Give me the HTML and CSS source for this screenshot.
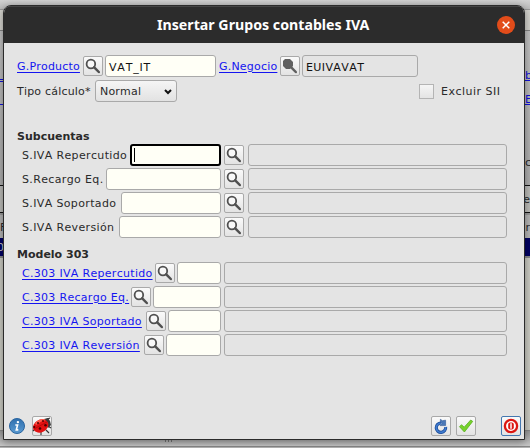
FILE: index.html
```
<!DOCTYPE html>
<html lang="es">
<head>
<meta charset="utf-8">
<title>Insertar Grupos contables IVA</title>
<link rel="stylesheet" href="styles.css">
</head>
<body>
<svg class="defs" width="0" height="0">
  <symbol id="lens" viewBox="0 0 20 20"><circle cx="7.9" cy="8" r="4.3" fill="#f8f8f8" stroke="#505050" stroke-width="1.8"/><path d="M11.2 11.3L15.8 16" stroke="#505050" stroke-width="2.5" stroke-linecap="round"/></symbol>
  <symbol id="lens-full" viewBox="0 0 20 20"><path d="M5 3h5l3 3v4l-3 3H6L3 10V5z" fill="#606060"/><path d="M11.2 11.3L15.8 16" stroke="#606060" stroke-width="2.5" stroke-linecap="round"/></symbol>
</svg>
<div class="desktop">
  <div class="band top"></div>
  <div class="band bar"></div>
  <div class="band form">
    <div class="left-links"><i></i><i></i></div>
    <div class="right-links"><a>b</a><a>E</a><span>c</span></div>
  </div>
  <div class="band tabs"><span>le</span></div>
  <div class="band heads"><span>F</span><span>ar</span></div>
  <div class="band selected"><span>0</span></div>
  <div class="band list"></div>
  <div class="band status"></div>
  <div class="grip"></div>
</div>
<main class="window">
  <header class="title"><h1>Insertar Grupos contables IVA</h1>
    <svg class="close" viewBox="0 0 18 18"><circle cx="9" cy="9" r="9" fill="#e24c1a"/><path d="M5.7 5.7l6.6 6.6M12.3 5.7l-6.6 6.6" stroke="#fff" stroke-width="1.5"/></svg>
  </header>
  <section class="body">
    <div class="row first">
      <a class="label w63">G.Producto</a><button class="btn"><svg><use href="#lens"/></svg></button><div class="field product">VAT_IT</div>
      <a class="label w58">G.Negocio</a><button class="btn"><svg><use href="#lens-full"/></svg></button><div class="field off business">EUIVAVAT</div>
    </div>
    <div class="row second">
      <span class="label w73">Tipo cálculo*</span>
      <div class="select">Normal<svg viewBox="0 0 8 6"><path d="M1 1l3 3 3-3" fill="none" stroke="#111" stroke-width="2"/></svg></div>
      <div class="check"><i></i><span class="label w60">Excluir SII</span></div>
    </div>
    <h2>Subcuentas</h2>
    <div class="group accounts">
      <div class="row"><span class="label w105">S.IVA Repercutido</span><div class="field grow focus"><i></i></div><button class="btn"><svg><use href="#lens"/></svg></button><div class="field off desc"></div></div>
      <div class="row"><span class="label w81">S.Recargo Eq.</span><div class="field grow"></div><button class="btn"><svg><use href="#lens"/></svg></button><div class="field off desc"></div></div>
      <div class="row"><span class="label w96">S.IVA Soportado</span><div class="field grow"></div><button class="btn"><svg><use href="#lens"/></svg></button><div class="field off desc"></div></div>
      <div class="row"><span class="label w94">S.IVA Reversión</span><div class="field grow"></div><button class="btn"><svg><use href="#lens"/></svg></button><div class="field off desc"></div></div>
    </div>
    <h2 class="model">Modelo 303</h2>
    <div class="group boxes">
      <div class="row"><a class="label w130">C.303 IVA Repercutido</a><button class="btn"><svg><use href="#lens"/></svg></button><div class="field grow"></div><div class="field off desc"></div></div>
      <div class="row"><a class="label w106">C.303 Recargo Eq.</a><button class="btn"><svg><use href="#lens"/></svg></button><div class="field grow"></div><div class="field off desc"></div></div>
      <div class="row"><a class="label w121">C.303 IVA Soportado</a><button class="btn"><svg><use href="#lens"/></svg></button><div class="field grow"></div><div class="field off desc"></div></div>
      <div class="row"><a class="label w119">C.303 IVA Reversión</a><button class="btn"><svg><use href="#lens"/></svg></button><div class="field grow"></div><div class="field off desc"></div></div>
    </div>
    <footer class="foot">
      <svg class="info" viewBox="0 0 16 16"><defs><linearGradient id="b" x1="0" y1="0" x2="0" y2="1"><stop offset="0" stop-color="#2f6fae"/><stop offset="1" stop-color="#5b9bd2"/></linearGradient></defs><circle cx="8" cy="8" r="7.5" fill="url(#b)" stroke="#2a659f"/><circle cx="8.9" cy="4.1" r="1.2" fill="#fff"/><path d="M6.3 7H8.6L7.3 11.9H9.3" fill="none" stroke="#fff" stroke-width="1.6"/></svg>
      <button class="btn bug"><svg viewBox="0 0 20 20"><path d="M3 13l-2 2M9 15v4M14 14l3 3M16 10l3 2M13 4l5-2" stroke="#333" stroke-width="1.1"/><path d="M12 3l4-1 2 3 1 4-3 3z" fill="#3a3a3a"/><ellipse cx="8.7" cy="10" rx="8" ry="6.2" transform="rotate(-28 8.7 10)" fill="#e21212"/><path d="M3 7Q9 1 14 4Q9 5 4 9z" fill="#ff5a4a"/><path d="M2 13L15 6" stroke="#a00" stroke-width=".6"/><g fill="#4a0000"><circle cx="6" cy="7" r="1"/><circle cx="11" cy="5" r=".9"/><circle cx="8" cy="12.5" r="1.3"/><circle cx="13.5" cy="9.3" r="1.3"/><circle cx="2.2" cy="11" r="1.1"/></g></svg></button>
      <button class="btn reload"><svg viewBox="0 0 20 20"><path d="M14.6 11A4.7 4.7 0 1 1 10 7" fill="none" stroke="#1e4f9b" stroke-width="3.2"/><path d="M14.6 11A4.7 4.7 0 1 1 10 7" fill="none" stroke="#3f7bd0" stroke-width="1.6"/><path d="M9.4 3.3l2 1.4 3.2-.5v5.4H9l2-2-1.6-1.2z" fill="#4a78b8" stroke="#2b5694" stroke-width=".6"/></svg></button>
      <button class="btn accept"><svg viewBox="0 0 20 20"><path d="M3.5 10.7l2-2 2.7 2.5L14.7 4l2 1.4L8.4 16z" fill="#77d22c" stroke="#58ae20" stroke-width=".8"/></svg></button>
      <button class="btn power"><svg viewBox="0 0 20 20"><circle cx="10" cy="10" r="6.1" fill="#fff" stroke="#dc1712" stroke-width="2.3"/><rect x="7.2" y="6.6" width="5.6" height="6.8" rx="2" fill="#dc1712"/><path d="M10 7.2v5.6" stroke="#fff" stroke-width="1.5"/></svg></button>
    </footer>
  </section>
</main>
</body>
</html>
```
FILE: styles.css
```
* { box-sizing: border-box; }
body { margin: 0; width: 530px; height: 448px; overflow: hidden; position: relative; font: 11px/14px "DejaVu Sans", sans-serif; font-kerning: none; color: #2a2a2a; }
.defs { position: absolute; }
.desktop { height: 448px; display: flex; flex-direction: column; background: #b5b5b5; position: relative; }
.band { display: flex; justify-content: space-between; overflow: hidden; flex: none; }
.top { height: 10px; background: linear-gradient(#d2d2d2, #bcbcbc); border-bottom: 1px solid #999; }
.bar { height: 21px; background: #d5d4ce; border-bottom: 1px solid #858585; }
.form { height: 155px; background: linear-gradient(#c2c2c2, #adadad); border-bottom: 1px solid #111; }
.left-links { width: 3px; padding-top: 48px; }
.left-links i { display: block; height: 3px; border-top: 1px solid #11d; border-bottom: 1px solid #11d; }
.left-links i + i { margin-top: 22px; border-bottom: 0; }
.right-links { width: 5px; padding-top: 38px; display: flex; flex-direction: column; }
.right-links a { height: 24px; color: #11d; text-decoration: underline; }
.right-links span { margin-top: 39px; }
.tabs { height: 27px; background: #bcbcb8; border-top: 2px solid #bbb; border-bottom: 1px solid #111; padding-top: 5px; justify-content: flex-end; }
.tabs span, .heads span:last-child { width: 5px; overflow: hidden; direction: rtl; }
.heads { height: 25px; background: #b5b5b5; border-top: 2px solid #999; padding-top: 6px; }
.selected { height: 20px; background: #000063; border-bottom: 2px solid #898989; color: #ccc; }
.selected span { margin: 3px 0 0 -3px; }
.list { height: 173px; background: #cbcbc3; border-bottom: 1px solid #888; }
.status { height: 16px; background: linear-gradient(#999, #c8c8c8); border-bottom: 1px solid #888; }
.grip { position: absolute; left: 165px; top: 440px; width: 7px; height: 2px; background: repeating-linear-gradient(90deg, #777 0 1px, transparent 1px 3px); }

.window { position: absolute; left: 3px; top: 5px; width: 522px; height: 435px; display: flex; flex-direction: column; background: #e4e4e4; border: 1px solid #2b2b2b; border-radius: 8px 8px 0 0; box-shadow: 0 2px 8px rgba(0,0,0,.4); overflow: hidden; }
.title { height: 37px; flex: none; background: #2c2c2c; border-top: 1px solid #454545; display: flex; align-items: center; position: relative; }
h1 { margin: 0 0 0 153px; font: bold 14.2px/20px "Noto Sans", "Open Sans", sans-serif; font-kerning: normal; color: #fff; white-space: nowrap; }
.close { width: 18px; height: 18px; margin-left: auto; margin-right: 9px; margin-bottom: 1px; }
.body { flex: 1; display: flex; flex-direction: column; }
.row { display: flex; align-items: center; height: 22px; flex: none; }
.first { margin: 12px 0 0 13px; }
.second { margin: 3px 0 0 13px; }
.label { flex: none; white-space: nowrap; letter-spacing: 0.2px; padding-top: 1px; }
.accounts .label { letter-spacing: 0.36px; }
.boxes .label { letter-spacing: 0.3px; }
.check .label { letter-spacing: 0.5px; }
a.label { color: #1414f0; text-decoration: underline; text-decoration-thickness: 1px; text-underline-offset: 2px; }
.w58 { width: 58px; } .w60 { width: 60px; } .w63 { width: 63px; } .w73 { width: 73px; } .w81 { width: 81px; } .w94 { width: 94px; } .w96 { width: 96px; } .w105 { width: 105px; } .w106 { width: 106px; } .w119 { width: 119px; } .w121 { width: 121px; } .w130 { width: 130px; }
.btn { width: 20px; height: 20px; padding: 0; margin: 0; flex: none; border: 1px solid #a9a9a9; border-radius: 2px; background: linear-gradient(#fafafa, #e3e3e3); display: flex; align-items: center; justify-content: center; }
.btn svg { width: 20px; height: 20px; margin: -1px; flex: none; }
.field { height: 22px; border: 1px solid #a9a9a9; border-radius: 3px; background: #fffff6; color: #111; flex: none; padding: 5px 3px 0; line-height: 14px; letter-spacing: 0.4px; }
.off { background: #e4e4e4; }
.first .btn { margin-left: 3px; margin-right: 2px; }
.product { width: 111px; margin-right: 3px; letter-spacing: 0.8px; }
.business { width: 116px; }
.select { width: 82px; height: 22px; margin-left: 5px; padding: 1px 4px 0; letter-spacing: 0.2px; display: flex; align-items: center; justify-content: space-between; border: 1px solid #a9a9a9; border-radius: 3px; background: linear-gradient(#f5f5f5, #e2e2e2); }
.select svg { width: 8px; height: 6px; }
.check { display: flex; align-items: center; gap: 7px; margin-left: 242px; }
.check i { width: 15px; height: 15px; border: 1px solid #b4b4b4; background: linear-gradient(#f5f5f5, #e4e4e4); }
h2 { margin: 28px 0 0 13px; font-size: 11px; line-height: 14px; }
h2.model { margin: 10px 0 0 13px; }
.group { display: flex; flex-direction: column; gap: 2px; margin-left: 18px; width: 485px; }
.grow { flex: 1; margin-left: 3px; }
.boxes .btn { margin-left: 3px; }
.boxes .grow { margin-left: 2px; }
.accounts .btn { margin: 0 4px 0 3px; }
.accounts .desc { width: 259px; }
.boxes .desc { width: 283px; margin-left: 3px; }
.focus { border: 2px solid #000; padding: 2px; }
.focus i { display: block; width: 1px; height: 14px; background: #000; }
.foot { margin-top: auto; padding: 0 3px 3px 5px; display: flex; align-items: center; }
.info { width: 16px; height: 16px; }
.bug { margin-left: 7px; }
.reload { margin-left: auto; }
.accept { margin-left: 5px; }
.power { margin-left: 25px; border-color: #4478b0; }
```
